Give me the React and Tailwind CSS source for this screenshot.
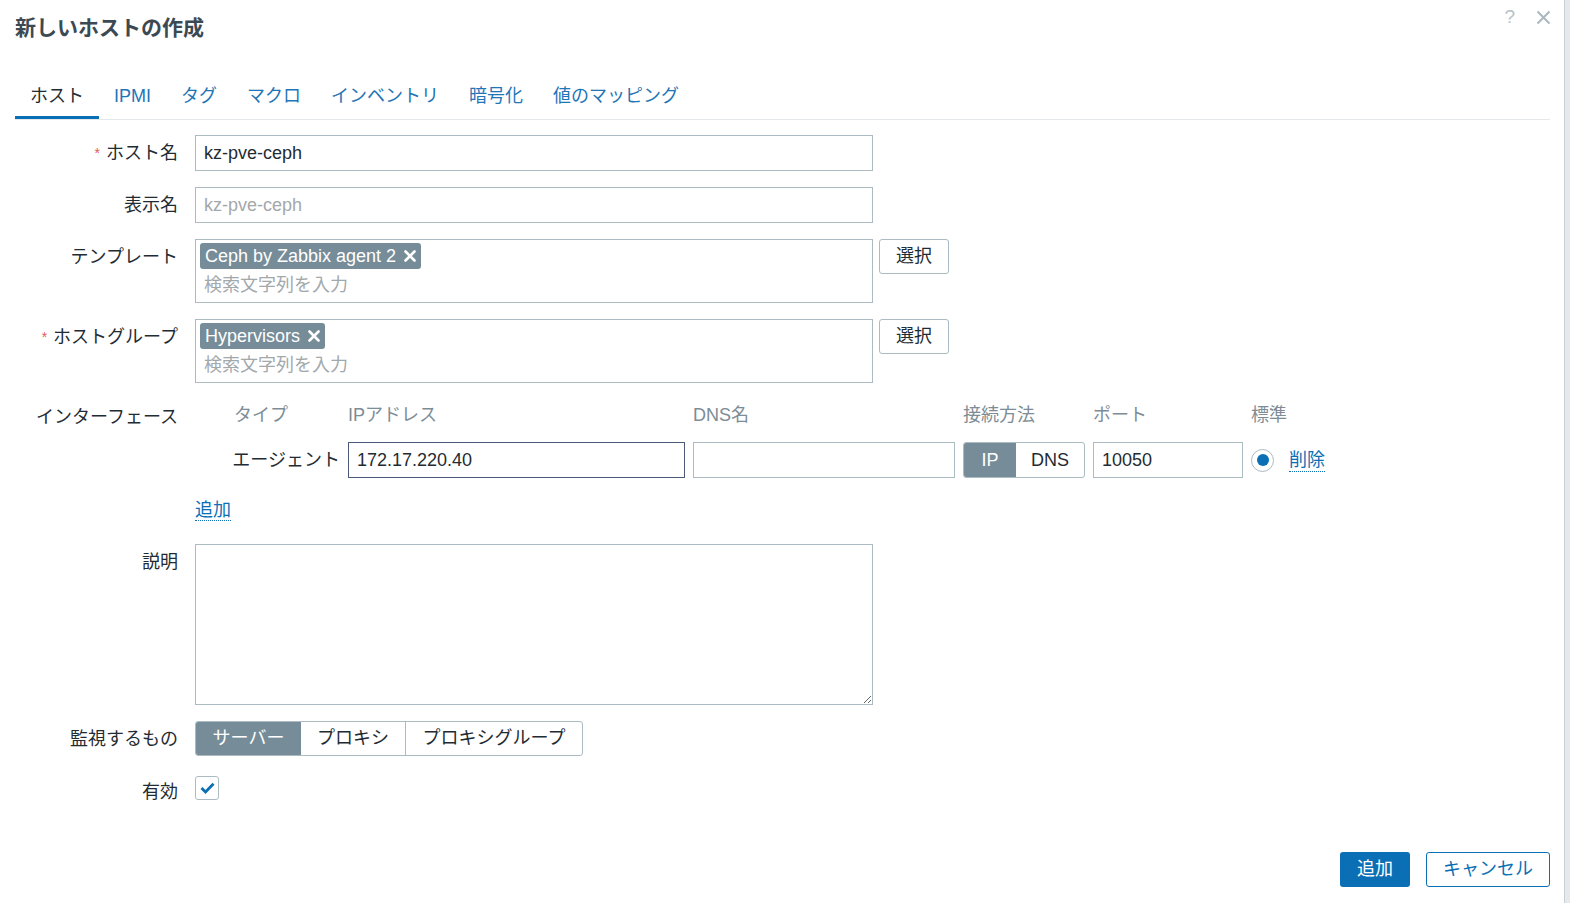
import React from 'react';

const FONT = { fontFamily: '"Liberation Sans", Arial, "Noto Sans CJK JP", sans-serif' };

const tabs = ['ホスト', 'IPMI', 'タグ', 'マクロ', 'インベントリ', '暗号化', '値のマッピング'];

const Label = ({ children, required, className = '' }) => (
  <div className={`text-right text-[18px] text-[#1f2c33] leading-[36px] whitespace-nowrap ${className}`}>
    {required && <span className="text-[#e45959] text-[14px] align-top mr-[6px]">*</span>}
    {children}
  </div>
);

const TextInput = ({ value, placeholder, className = '', focused }) => (
  <div
    className={`h-[36px] border bg-white px-[8px] flex items-center text-[18px] ${
      focused ? 'border-[#4a5a78]' : 'border-[#acbbc2]'
    } ${className}`}
  >
    {value ? (
      <span className="text-[#1f2c33]">{value}</span>
    ) : (
      <span className="text-[#a3a8ab]">{placeholder}</span>
    )}
  </div>
);

const Chip = ({ text }) => (
  <span className="inline-flex items-center h-[26px] px-[5px] rounded-[3px] bg-[#768d99] text-white text-[18px] leading-[26px]">
    {text}
    <svg className="ml-[8px]" width="12" height="12" viewBox="0 0 12 12">
      <path d="M1.5 1.5 L10.5 10.5 M10.5 1.5 L1.5 10.5" stroke="white" strokeWidth="2.6" strokeLinecap="round" />
    </svg>
  </span>
);

const MultiSelect = ({ chip }) => (
  <div className="flex items-start gap-[6px]">
    <div className="w-[678px] h-[64px] border border-[#acbbc2] bg-white px-[4px] pt-[3px]">
      <Chip text={chip} />
      <div className="mt-[2px] px-[4px] leading-[28px] text-[18px] text-[#a3a8ab]">検索文字列を入力</div>
    </div>
    <button className="h-[35px] w-[70px] border border-[#acbbc2] rounded-[3px] bg-white text-[18px] text-[#1f2c33]">
      選択
    </button>
  </div>
);

const Link = ({ children }) => (
  <span className="text-[18px] text-[#0a6fb5] border-b border-dotted border-[#0a6fb5] leading-[22px]">{children}</span>
);

export default function App() {
  return (
    <div className="flex w-[1570px] h-[903px] overflow-hidden bg-[#e6e9eb]" style={FONT}>
      <div className="w-[1565px] h-full bg-white border-r border-[#c9d0d4] pl-[15px] pr-[14px] flex flex-col">
        {/* header */}
        <div className="flex justify-between items-start">
          <h1 className="pt-[14px] leading-[28px] text-[21px] font-bold text-[#3b4953]">新しいホストの作成</h1>
          <div className="flex items-center gap-[21px] pt-[3px] -mr-[1px]">
            <span className="text-[19px] text-[#b5c2c8]">?</span>
            <svg width="15" height="15" viewBox="0 0 15 15">
              <path d="M1.5 1.5 L13.5 13.5 M13.5 1.5 L1.5 13.5" stroke="#aab8bf" strokeWidth="2" />
            </svg>
          </div>
        </div>

        {/* tabs */}
        <div className="mt-[30px] flex border-b border-[#e6e9eb]">
          {tabs.map((t, i) => (
            <div
              key={t}
              className={`px-[15px] pt-[12px] pb-[8px] leading-[24px] text-[18px] border-b-[3px] ${
                i === 0 ? 'border-[#0a6fb5] text-[#1f2c33]' : 'border-transparent text-[#1f75b6]'
              }`}
            >
              {t}
            </div>
          ))}
        </div>

        {/* form */}
        <div className="pt-[15px] grid grid-cols-[163px_1fr] gap-x-[17px] gap-y-[16px]">
          <Label required>ホスト名</Label>
          <TextInput value="kz-pve-ceph" className="w-[678px]" />

          <Label>表示名</Label>
          <TextInput placeholder="kz-pve-ceph" className="w-[678px]" />

          <Label className="leading-[32px]">テンプレート</Label>
          <MultiSelect chip="Ceph by Zabbix agent 2" />

          <Label required className="leading-[32px]">ホストグループ</Label>
          <MultiSelect chip="Hypervisors" />

          <Label className="leading-[32px]">インターフェース</Label>
          <div className="pb-[5px]">
            <div className="grid grid-cols-[145px_337px_262px_122px_150px_30px_auto] gap-x-[8px] text-[18px]">
              <div className="pl-[39px] leading-[32px] text-[#7d8c95] whitespace-nowrap">タイプ</div>
              <div className="leading-[32px] text-[#7d8c95]">IPアドレス</div>
              <div className="leading-[32px] text-[#7d8c95]">DNS名</div>
              <div className="leading-[32px] text-[#7d8c95]">接続方法</div>
              <div className="leading-[32px] text-[#7d8c95]">ポート</div>
              <div className="leading-[32px] text-[#7d8c95] whitespace-nowrap">標準</div>
              <div />

              <div className="mt-[11px] text-right leading-[36px] text-[#1f2c33] whitespace-nowrap">エージェント</div>
              <TextInput value="172.17.220.40" focused className="mt-[11px]" />
              <TextInput className="mt-[11px]" />
              <div className="mt-[11px] flex h-[36px] border border-[#acbbc2] rounded-[3px] overflow-hidden">
                <div className="w-[52px] flex items-center justify-center bg-[#768d99] text-white">IP</div>
                <div className="flex-1 flex items-center justify-center text-[#1f2c33]">DNS</div>
              </div>
              <TextInput value="10050" className="mt-[11px]" />
              <div className="mt-[11px] h-[36px] flex items-center">
                <span className="w-[23px] h-[23px] rounded-full border border-[#acbbc2] bg-white flex items-center justify-center">
                  <span className="w-[12px] h-[12px] rounded-full bg-[#0a6fb5]" />
                </span>
              </div>
              <div className="mt-[11px] h-[36px] flex items-center">
                <Link>削除</Link>
              </div>
            </div>
            <div className="mt-[21px] leading-[24px]">
              <Link>追加</Link>
            </div>
          </div>

          <Label>説明</Label>
          <textarea className="w-[678px] h-[161px] border border-[#acbbc2] bg-white outline-none resize" />

          <Label className="leading-[34px]">監視するもの</Label>
          <div className="flex">
            <div className="flex h-[35px] border border-[#acbbc2] rounded-[3px] overflow-hidden text-[18px]">
              <div className="w-[105px] flex items-center justify-center bg-[#768d99] text-white">サーバー</div>
              <div className="w-[105px] flex items-center justify-center text-[#1f2c33] border-r border-[#acbbc2]">プロキシ</div>
              <div className="w-[176px] flex items-center justify-center text-[#1f2c33]">プロキシグループ</div>
            </div>
          </div>

          <Label className="leading-[24px] mt-[1px]">有効</Label>
          <div className="mt-[3px]">
            <div className="w-[24px] h-[24px] border border-[#acbbc2] rounded-[3px] bg-white flex items-center justify-center">
              <svg width="15" height="12" viewBox="0 0 15 12">
                <path d="M1.5 6 L5.5 10 L13.5 1.8" fill="none" stroke="#0a6fb5" strokeWidth="2.8" />
              </svg>
            </div>
          </div>
        </div>

        {/* footer */}
        <div className="mt-[42px] flex justify-end gap-[16px]">
          <button className="h-[35px] w-[70px] rounded-[3px] bg-[#0a6fb5] text-white text-[18px]">追加</button>
          <button className="h-[35px] w-[124px] rounded-[3px] border border-[#0a6fb5] bg-white text-[#0a6fb5] text-[18px]">
            キャンセル
          </button>
        </div>
      </div>
      <div className="flex-1" />
    </div>
  );
}
